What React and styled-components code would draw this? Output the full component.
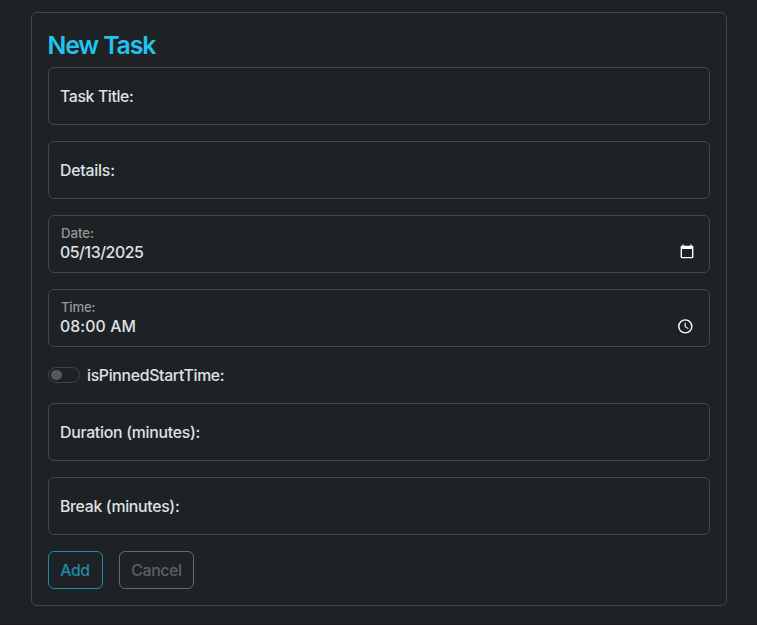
import React from "react";
import styled, { createGlobalStyle } from "styled-components";

const GlobalStyle = createGlobalStyle`
  * { box-sizing: border-box; }
  html { background: #1e2225; }
  body {
    margin: 0;
    background: #1e2225;
    color: #dee2e6;
    font-family: Inter, "Liberation Sans", sans-serif;
    font-size: 15.8px;
    font-weight: 450;
    line-height: 24px;
    overflow: hidden;
  }
`;

const Page = styled.main`
  height: 625px;
  padding: 12px 30px 0 31px;
  border-bottom: 2px solid #1c1c21;
`;

const Card = styled.form`
  display: flex;
  flex-direction: column;
  gap: 16px;
  height: 594px;
  padding: 16px;
  border: 1px solid #414548;
  border-radius: 6px;
`;

const Title = styled.h3`
  height: 30px;
  margin: 0 0 -8px -0.5px;
  color: #22c3ec;
  font-size: 24.8px;
  font-weight: 600;
  line-height: 32px;
  white-space: nowrap;
`;

const Text = styled.span`
  letter-spacing: ${(p) => p.$tracking || 0}px;
  white-space: pre;
`;

const Field = styled.div`
  display: flex;
  align-items: center;
  justify-content: space-between;
  height: 58px;
  flex: none;
  padding: 0 12px 0 11px;
  border: 1px solid #41464b;
  border-radius: 6px;
`;

const Label = styled.label`
  padding-top: 2px;
`;

const Stack = styled.div`
  display: flex;
  flex-direction: column;
`;

const SmallLabel = styled.label`
  padding-left: 1px;
  height: 17px;
  color: #93979a;
  font-size: 13.2px;
  font-weight: 500;
  line-height: 17px;
`;

const Value = styled.div`
  height: 22px;
  line-height: 22px;
`;

const PickerIcon = styled.svg`
  display: block;
  flex: none;
  margin-top: ${(p) => p.$top}px;
  margin-right: ${(p) => p.$inset}px;
`;

const SwitchRow = styled.div`
  display: flex;
  align-items: center;
  gap: 7px;
  height: 24px;
`;

const Switch = styled.span`
  display: flex;
  align-items: center;
  width: 32px;
  height: 16px;
  padding-left: 2px;
  border: 1px solid #414548;
  border-radius: 8px;
`;

const Knob = styled.span`
  width: 10.5px;
  height: 10.5px;
  border-radius: 50%;
  background: #56595c;
`;

const Actions = styled.div`
  display: flex;
  gap: 16px;
`;

const Button = styled.button`
  width: ${(p) => p.$width}px;
  height: 38px;
  padding: 2px ${(p) => p.$trim || 0}px 0 0;
  border: 1px solid ${(p) => p.$line};
  border-radius: 6px;
  background: transparent;
  color: ${(p) => p.$color};
  font: inherit;
  white-space: nowrap;
`;

const CalendarIcon = () => (
  <PickerIcon width="14" height="15" viewBox="0 0 14 15" $top={15} $inset={3}>
    <path fill="#fff" fillRule="evenodd" d="M2.4.6h1.3v1.2h6.6V.6h1.3v1.2h.7q1.1 0 1.1 1.1v10.2q0 1.1-1.1 1.1H1.7Q.6 14.200.6 13.100V2.900q0-1.100 1.100-1.100h.7ZM2 5v8h10V5Z" />
  </PickerIcon>
);

const ClockIcon = () => (
  <PickerIcon width="16" height="16" viewBox="0 0 16 16" fill="none" stroke="#fff" $top={16} $inset={4}>
    <circle cx="8.3" cy="8.4" r="6.5" strokeWidth="1.4" />
    <path d="M8.200 4.700V8.700L11.300 10.600" strokeWidth="1.100" />
  </PickerIcon>
);

const EmptyField = ({ label, tracking }) => (
  <Field>
    <Label><Text $tracking={tracking}>{label}</Text></Label>
  </Field>
);

const PickerField = ({ label, labelTracking, value, tracking, icon }) => (
  <Field>
    <Stack>
      <SmallLabel><Text $tracking={labelTracking}>{label}</Text></SmallLabel>
      <Value><Text $tracking={tracking}>{value}</Text></Value>
    </Stack>
    {icon}
  </Field>
);

export default function App() {
  return (
    <>
      <GlobalStyle />
      <Page>
        <Card>
          <Title><Text $tracking={-1.13}>New Task</Text></Title>
          <EmptyField label="Task Title:" tracking={-0.36} />
          <EmptyField label="Details:" tracking={-0.2} />
          <PickerField label="Date:" labelTracking={-0.05} value="05/13/2025" tracking={-0.42} icon={<CalendarIcon />} />
          <PickerField label="Time:" labelTracking={-0.25} value="08:00 AM" tracking={0.1} icon={<ClockIcon />} />
          <SwitchRow>
            <Switch><Knob /></Switch>
            <Label><Text $tracking={-0.31}>isPinnedStartTime:</Text></Label>
          </SwitchRow>
          <EmptyField label="Duration (minutes):" tracking={-0.26} />
          <EmptyField label="Break (minutes):" tracking={-0.3} />
          <Actions>
            <Button type="button" $width={55} $trim={1} $line="#1d8ba6" $color="#1d8ba6"><Text $tracking={-0.35}>Add</Text></Button>
            <Button type="button" $width={75} $line="#646a70" $color="#5b6167"><Text $tracking={-0.35}>Cancel</Text></Button>
          </Actions>
        </Card>
      </Page>
    </>
  );
}
